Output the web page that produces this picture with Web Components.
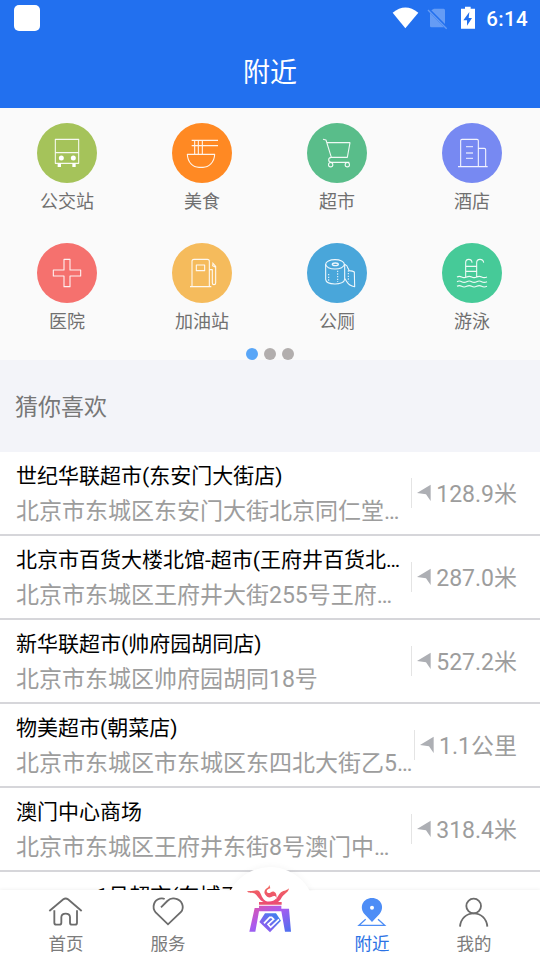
<!DOCTYPE html>
<html lang="zh-CN">
<head>
<meta charset="utf-8">
<title>附近</title>
<style>
html,body{margin:0;height:100%;overflow:hidden;background:#fff}
body{font-family:Roboto,"Noto Sans CJK SC",sans-serif}
</style>
</head>
<body>
<nearby-page></nearby-page>
<script>
const define = (name, html) => customElements.define(name, class extends HTMLElement {
  constructor() {
    super();
    const t = document.createElement('template');
    t.innerHTML = typeof html === 'function' ? html(this) : html;
    this.attachShadow({mode: 'open'}).append(t.content.cloneNode(true));
  }
});

define('status-bar', `
<style>
:host{display:flex;align-items:center;height:36px;padding:0 12px 0 14px;color:#fff}
.app{width:26px;height:26px;border-radius:5px;background:#fff;margin-right:auto}
svg{display:block}
time{font:500 20.5px/36px Roboto,sans-serif;letter-spacing:.35px;margin-left:10px;padding-top:2px}
</style>
<div class="app"></div>
<svg width="85" height="28" viewBox="363 10 255 84">
<path fill="#fff" d="M368 36Q406 5 445 36L406 83Z"/>
<path fill="#659cf5" d="M492 24H521Q525 24 525 29V70L484 29ZM480 37L522 80H484Q480 80 480 76Z"/>
<path stroke="#659cf5" stroke-width="4" d="M474 28L530 84"/>
<path fill="#fff" d="M585 18H602V24H615V84H573V24H585Z"/>
<path fill="#2270ef" d="M598 34L580 59H591V75L606 52H596Z"/>
</svg>
<time>6:14</time>`);

define('app-header', `
<style>
:host{display:block;height:108px;background:#2270ef;color:#fff}
h1{margin:0;font-size:27px;font-weight:400;line-height:74px;text-align:center}
</style>
<status-bar></status-bar><h1><slot></slot></h1>`);

const icons = {
bus:`<path d="M55 49H125V121H55ZM55 89H125"/><g fill="#fff" stroke="none"><circle cx="73" cy="105" r="7.5"/><circle cx="109" cy="105" r="7.5"/><path d="M62 121H72V132H62ZM106 121H116V132H106Z"/></g>`,
food:`<path d="M59 52H138M59 68H138M68 52V94M79 52V94M91 52V94M46 94H128C127 119 110 133 93 133H81C63 133 47 119 46 94Z"/>`,
cart:`<path d="M48 49L57 51L73 103H121L129 59H60M73 103Q65 104 65 110Q65 118 74 118H127"/><circle cx="71" cy="125" r="6.5"/><circle cx="121" cy="125" r="6.5"/>`,
hotel:`<path d="M48 131H137M56 131V53Q56 49 60 49H105Q109 49 109 53V131M109 76H127Q131 76 131 80V131"/><path stroke-width="4" opacity=".8" d="M72 71H93M72 90H93M72 106H93"/>`,
cross:`<path d="M81 49H99V81H131V99H99V131H81V99H49V81H81Z"/>`,
gas:`<path d="M54 131H118M60 131V55Q60 49 66 49H106Q112 49 112 55V131M73 66H98V83H73ZM112 80H121V120Q121 125 126 125Q131 125 131 120V70L121 59M122 64V68L131 73"/>`,
paper:`<ellipse cx="84" cy="64" rx="28" ry="14"/><ellipse cx="85" cy="64" rx="9" ry="4" stroke-width="4"/><path d="M56 64V109C58 128 111 127 113 109V64Q121 67 123 76L127 83Q138 84 142 87L143 131Q126 128 120 117L113 106"/><path stroke-dasharray="4 4" d="M65 93V117M92 83V117M124 82V115"/>`,
pool:`<path d="M71 102V59Q71 49 80 49Q90 49 90 59M104 102V59Q104 49 114 49Q124 49 125 59M71 70H104M71 85H104M45 102Q52 98 59 102T74 102T89 102T104 102T119 102T135 102M45 116Q52 112 59 116T74 116T89 116T104 116T119 116T135 116M45 130Q52 126 59 130T74 130T89 130T104 130T119 130T135 130"/>`
};
define('category-item', el => `
<style>
:host{display:flex;flex-direction:column;align-items:center;height:120px;color:#707070;font-size:18px;line-height:26px}
svg{display:block;width:60px;height:60px;margin:15px 0 6px;border-radius:50%;background:${el.getAttribute('color')}}
span{padding-left:1px}
</style>
<svg viewBox="0 0 180 180" fill="none" stroke="#fff" stroke-opacity=".9" stroke-width="3.3" stroke-linejoin="round">${icons[el.getAttribute('icon')]}</svg>
<span><slot></slot></span>`);

define('category-grid', `
<style>
:host{display:block;height:252px;background:#fafafa}
.grid{display:grid;grid-template-columns:repeat(4,135px);margin-left:-1px}
.dots{display:flex;justify-content:center;gap:6px}
i{width:12px;height:12px;border-radius:50%;background:#b2aead}
i:first-child{background:#59a6f7}
</style>
<div class="grid"><slot></slot></div><div class="dots"><i></i><i></i><i></i></div>`);

define('section-title', `
<style>:host{display:block;height:92px;background:#f3f4f9;color:#777;font-size:23px;line-height:96px;padding-left:15px}</style><slot></slot>`);

define('place-row', `
<style>
:host{display:flex;justify-content:space-between;align-items:center;box-sizing:border-box;height:84px;border-bottom:2px solid #d6d6da;padding:0 23px 0 16px;white-space:nowrap;background:#fff}
.text{width:0;padding-top:3px}
.name{color:#000;font-size:21px;line-height:35px}
.addr{color:#9d9d9d;font-size:23px;line-height:36px}
.dist{display:flex;align-items:center;height:30px;border-left:1px solid #e4e4e4;padding-left:5.5px;color:#9d9d9d;font-size:23px;line-height:30px}
.dist svg{width:14px;height:18px;margin-right:5px}
.dist span{padding-top:3px}
:host([nodist]) .dist{display:none}
</style>
<div class="text"><div class="name"><slot name="name"></slot></div><div class="addr"><slot name="addr"></slot></div></div>
<div class="dist"><svg viewBox="443 101 42 54"><path fill="#adafb4" d="M443 128L484 103V152L470 132Z"/></svg><span><slot name="dist"></slot></span></div>`);

const tabs = {
home:`<svg viewBox="138 108 120 96"><path d="M148 153L190 118Q197 113 204 118L245 153M163 151V188Q163 194 169 194H178Q184 194 184 188V171Q185 161 197 161Q209 161 210 171V188Q210 194 216 194H225Q231 194 231 188V151"/></svg>`,
heart:`<svg viewBox="444 108 120 96"><path d="M483 142L502 123Q513 112 526 116C547 120 554 142 543 156L504 193L467 157C455 143 461 121 479 116Q488 114 494 117"/></svg>`,
pin:`<svg viewBox="96 108 120 96"><path stroke-width="4" d="M137 178L117 196H194L174 178"/><path stroke="none" fill="#4d8df6" fill-rule="evenodd" d="M156 186L134 163C116 142 129 114 156 114S196 142 178 163ZM156 137A6 6 0 1 0 156 149A6 6 0 1 0 156 137Z"/></svg>`,
user:`<svg viewBox="402 108 120 96"><circle cx="461" cy="138" r="22"/><path d="M420 200C422 175 440 160 461 160S500 175 502 200"/></svg>`
};
define('tab-item', el => `
<style>
:host{display:flex;flex-direction:column;align-items:center;flex:1;color:#7c7c7c;font-size:17.5px;line-height:26px;padding-top:6px}
:host([active]){color:#2b72e5}
svg{display:block;width:40px;height:32px;margin-bottom:3px;fill:none;stroke:#6c6c6c;stroke-width:5.5}
:host([active]) svg{stroke:#4d8df6}
</style>${tabs[el.getAttribute('icon')]}<slot></slot>`);

define('center-logo', `
<style>
:host{display:block;flex:1;position:relative}
.disc{position:absolute;left:6px;top:-23px;width:90px;height:90px;border-radius:50%;background:#fff;box-shadow:0 0 7px #0000000d}
.cover{position:absolute;left:0;top:1px;width:102px;height:69px;background:#fff}
svg{position:absolute;left:26px;top:-6px;width:50px;height:50px}
</style>
<div class="disc"></div><div class="cover"></div>
<svg viewBox="75 72 150 150">
<defs><linearGradient id="l" x1="0" y1="0" x2="1" y2="1"><stop stop-color="#e253a5"/><stop offset=".45" stop-color="#a95bf0"/><stop offset="1" stop-color="#4a70ef"/></linearGradient>
<linearGradient id="c" x1="0" y1="1" x2="1" y2="0"><stop stop-color="#a852f0"/><stop offset="1" stop-color="#2f86ed"/></linearGradient>
<linearGradient id="r" x1="0" y1="0" x2="0" y2="1"><stop stop-color="#f0695b"/><stop offset="1" stop-color="#ed4878"/></linearGradient></defs>
<path fill="url(#r)" d="M81 94C91 92 100 94 110 91C124 91 123 116 136 122C148 128 163 122 168 116C170 108 162 106 154 111C147 115 140 110 136 104C129 96 136 86 145 82L148 75L151 85C141 87 137 94 143 98C150 103 155 91 162 95C170 99 171 108 168 119C175 106 179 97 190 93C200 91 202 89 207 85C205 98 194 100 186 111C181 122 173 130 160 132H120V127H132C116 121 113 104 102 100C94 98 88 101 81 94Z"/>
<path fill="url(#l)" d="M117 137H184V146H207L213 215H195L184 154H117L106 215H88L104 144H117Z"/>
<path fill="#ea5270" d="M117 126H136L144 132H158L169 126H185V134H117Z"/>
<path fill="url(#c)" d="M135 160H168L183 182L150 217L118 186Z"/>
<path fill="none" stroke="#fff" stroke-width="5" d="M132 190L149 172H155L161 178L144 193L152 202L177 178"/>
</svg>`);

define('tab-bar', `
<style>:host{display:flex;position:absolute;left:0;right:0;bottom:0;height:70px;box-sizing:border-box;padding:0 15px;background:#fff;box-shadow:0 -1px 3px #0000000d}</style><slot></slot>`);

define('nearby-page', `
<style>
:host{display:block;position:relative;width:540px;height:960px;overflow:hidden;background:#fff}
.partial{padding-left:80.5px}
</style>
<app-header>附近</app-header>
<category-grid>
<category-item icon="bus" color="#a5c35a">公交站</category-item>
<category-item icon="food" color="#ff8923">美食</category-item>
<category-item icon="cart" color="#59bd8a">超市</category-item>
<category-item icon="hotel" color="#7789f2">酒店</category-item>
<category-item icon="cross" color="#f5716e">医院</category-item>
<category-item icon="gas" color="#f5bb5c">加油站</category-item>
<category-item icon="paper" color="#49a6da">公厕</category-item>
<category-item icon="pool" color="#46ca98">游泳</category-item>
</category-grid>
<section-title>猜你喜欢</section-title>
<place-row><span slot="name">世纪华联超市(东安门大街店)</span><span slot="addr">北京市东城区东安门大街北京同仁堂…</span><span slot="dist">128.9米</span></place-row>
<place-row><span slot="name">北京市百货大楼北馆-超市(王府井百货北…</span><span slot="addr">北京市东城区王府井大街255号王府…</span><span slot="dist">287.0米</span></place-row>
<place-row><span slot="name">新华联超市(帅府园胡同店)</span><span slot="addr">北京市东城区帅府园胡同18号</span><span slot="dist">527.2米</span></place-row>
<place-row><span slot="name">物美超市(朝菜店)</span><span slot="addr">北京市东城区市东城区东四北大街乙5…</span><span slot="dist">1.1公里</span></place-row>
<place-row><span slot="name">澳门中心商场</span><span slot="addr">北京市东城区王府井东街8号澳门中…</span><span slot="dist">318.4米</span></place-row>
<place-row nodist><span slot="name" class="partial">1号超市(东城王</span><span slot="addr">&nbsp;</span></place-row>
<tab-bar>
<tab-item icon="home">首页</tab-item>
<tab-item icon="heart">服务</tab-item>
<center-logo></center-logo>
<tab-item icon="pin" active>附近</tab-item>
<tab-item icon="user">我的</tab-item>
</tab-bar>`);
</script>
</body>
</html>
